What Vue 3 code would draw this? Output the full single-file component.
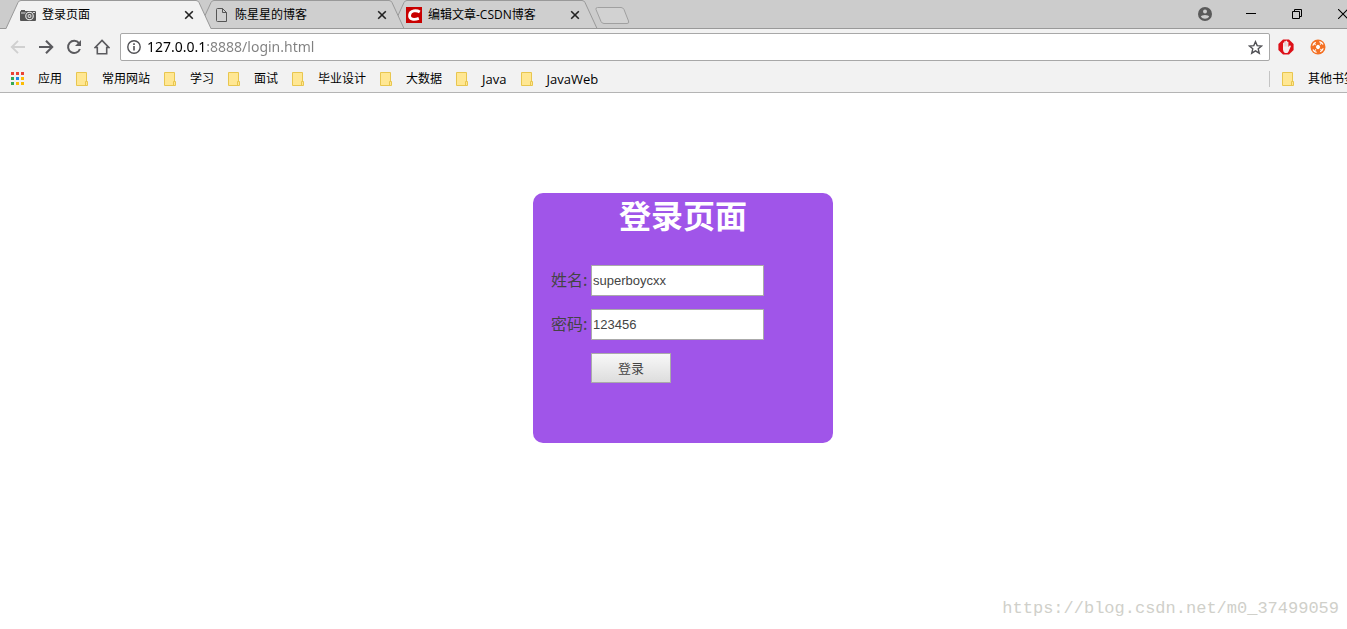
<script setup>
import { ref } from 'vue'

const tabs = [
  { title: '登录页面', icon: 'camera', active: true },
  { title: '陈星星的博客', icon: 'page', active: false },
  { title: '编辑文章-CSDN博客', icon: 'csdn', active: false },
]
const bookmarks = [
  { title: '常用网站' },
  { title: '学习' },
  { title: '面试' },
  { title: '毕业设计' },
  { title: '大数据' },
  { title: 'Java', latin: true },
  { title: 'JavaWeb', latin: true },
]
const appColors = ['#ea4335', '#ea4335', '#ea4335', '#34a853', '#1e88e5', '#fbbc05', '#34a853', '#fbbc05', '#fbbc05']

const url = ref('127.0.0.1:8888/login.html')
const name = ref('superboycxx')
const password = ref('123456')
</script>

<template>
  <div class="screen">
    <div class="browser">
      <header class="chrome">
        <div class="strip">
          <div
            v-for="(tab, i) in tabs"
            :key="tab.title"
            class="tab"
            :class="{ active: tab.active }"
            :style="{ zIndex: tabs.length - i }"
          >
            <svg class="tab-shape" width="208" height="29" viewBox="0 0 208 29" aria-hidden="true">
              <path class="tab-fill" d="M1 29 L13 2.5 Q14 .5 16 .5 H191 Q193 .5 194 2.5 L206 29 Z" />
              <path class="tab-line" d="M0 28.5 H1 L13 2.5 Q14 .5 16 .5 H191 Q193 .5 194 2.5 L206 28.5 H208" />
              <path v-if="!tab.active" class="tab-line" d="M1 28.5 H206" />
            </svg>
            <svg v-if="tab.icon === 'camera'" class="tab-icon" width="16" height="16" viewBox="0 0 16 16" aria-hidden="true">
              <path d="M1 3 H5 V4 H15 Q16 4 16 5 V13 Q16 14 15 14 H1 Q0 14 0 13 V5 Q0 4 1 4 Z" fill="#555" />
              <path d="M1 5 H6 L5 7 H1 Z" fill="#999" />
              <circle cx="9.5" cy="9" r="4.3" fill="#eee" />
              <circle cx="9.5" cy="9" r="3.2" fill="#555" />
              <circle cx="9.5" cy="9" r="2" fill="#ddd" />
              <circle cx="9.5" cy="9" r="1" fill="#666" />
              <path d="M13 5 H15 V6 H13 Z" fill="#ddd" />
            </svg>
            <svg v-else-if="tab.icon === 'page'" class="tab-icon" width="16" height="16" viewBox="0 0 16 16" aria-hidden="true">
              <path d="M4.5 1.5 H9.5 L13.5 5.5 V14.5 H4.5 Q3.5 14.5 3.5 13.5 V2.5 Q3.5 1.5 4.5 1.5 Z M9.5 1.5 V5.5 H13.5" fill="none" stroke="#555" />
            </svg>
            <svg v-else class="tab-icon" width="16" height="16" viewBox="0 0 16 16" aria-hidden="true">
              <path d="M0 0 H16 V16 H0 Z" fill="#c90000" />
              <path d="M13.8 5 C10.5 3 4.2 3.2 3.6 8 C3 13 8.5 13 12.8 11.4" fill="none" stroke="#fff" stroke-width="2.8" />
            </svg>
            <span class="tab-title">{{ tab.title }}</span>
            <button class="tab-close" type="button" :aria-label="`关闭 ${tab.title}`">
              <svg width="10" height="10" viewBox="0 0 10 10"><path d="M1.2 1.2 L8.8 8.8 M8.8 1.2 L1.2 8.8" stroke="#222" stroke-width="1.6" /></svg>
            </button>
          </div>
          <button class="new-tab" type="button" aria-label="新标签页">
            <svg width="35" height="18" viewBox="0 0 35 18">
              <path d="M2.5 .5 H26 Q28 .5 29 2.5 L33.5 14 Q34.5 16.5 32 16.5 H9 Q7 16.5 6 14.5 L1 2.5 Q.5 .5 2.5 .5 Z" fill="#d2d2d2" stroke="#a0a0a0" />
            </svg>
          </button>
          <div class="window-controls">
            <button type="button" aria-label="用户">
              <svg width="14" height="14" viewBox="0 0 14 14"><circle cx="7" cy="7" r="7" fill="#5a5a5a" /><circle cx="7" cy="4.4" r="2" fill="#ccc" /><path d="M2.8 9.8 Q3.4 7.9 7 7.9 Q10.6 7.9 11.2 9.8 Q9.7 11.7 7 11.7 Q4.3 11.7 2.8 9.8Z" fill="#ccc" /></svg>
            </button>
            <button type="button" aria-label="最小化">
              <svg width="10" height="10" viewBox="0 0 10 10"><path d="M0 4.5 H10" stroke="#000" /></svg>
            </button>
            <button type="button" aria-label="还原">
              <svg width="10" height="10" viewBox="0 0 10 10"><path d="M.5 2.5 H7.5 V9.5 H.5 Z M2.5 2.5 V.5 H9.5 V7.5 H7.5" fill="none" stroke="#000" /></svg>
            </button>
            <button type="button" aria-label="关闭">
              <svg width="10" height="10" viewBox="0 0 10 10"><path d="M0 0 L10 10 M10 0 L0 10" stroke="#000" stroke-width="1.1" /></svg>
            </button>
          </div>
        </div>

        <div class="toolbar">
          <nav class="nav">
            <button type="button" aria-label="后退">
              <svg width="16" height="16" viewBox="0 0 16 16"><path d="M15 8 H2 M8 1.8 L1.8 8 L8 14.2" fill="none" stroke="#d0d0d0" stroke-width="1.9" /></svg>
            </button>
            <button type="button" aria-label="前进">
              <svg width="16" height="16" viewBox="0 0 16 16"><path d="M1 8 H14 M8 1.8 L14.2 8 L8 14.2" fill="none" stroke="#5a5a5e" stroke-width="2.1" /></svg>
            </button>
            <button type="button" aria-label="重新加载">
              <svg width="16" height="16" viewBox="0 0 16 16"><path d="M13 4.2 A6.1 6.1 0 1 0 13.9 10" fill="none" stroke="#5a5a5e" stroke-width="2" /><path d="M15 1 V7 H9 Z" fill="#5a5a5e" /></svg>
            </button>
            <button type="button" aria-label="主页">
              <svg width="16" height="16" viewBox="0 0 16 16"><path d="M8 1.4 L14.8 8.5 H12.7 V14.7 H3.3 V8.5 H1.2 Z" fill="none" stroke="#5a5a5e" stroke-width="1.6" /></svg>
            </button>
          </nav>
          <div class="omnibox">
            <svg width="14" height="14" viewBox="0 0 14 14" aria-hidden="true"><circle cx="7" cy="7" r="6.2" fill="none" stroke="#505054" stroke-width="1.4" /><path d="M7 6 V10.5 M7 3.3 V4.9" stroke="#505054" stroke-width="1.6" /></svg>
            <input v-model="url" class="url" type="text" aria-label="地址" spellcheck="false" />
            <button type="button" aria-label="收藏">
              <svg width="15" height="15" viewBox="0 0 16 16"><path d="M8 1.8 L9.8 6 L14.5 6.4 L10.9 9.4 L12 14 L8 11.5 L4 14 L5.1 9.4 L1.5 6.4 L6.2 6 Z" fill="none" stroke="#505054" stroke-width="1.5" /></svg>
            </button>
          </div>
          <div class="extensions">
            <button type="button" aria-label="广告拦截">
              <svg width="16" height="16" viewBox="0 0 16 16">
                <path d="M5 .4 H11 L15.6 5 V11 L11 15.6 H5 L.4 11 V5 Z" fill="#dd1018" />
                <path d="M5 4 Q5.6 3.2 6.2 4 V2.6 Q6.9 1.8 7.6 2.6 V2 Q8.3 1.2 9 2 V3 Q9.7 2.2 10.4 3 V8 L11.6 6.6 Q12.6 6.2 13 7 L11.2 11 Q10.6 13 9.4 14 H6.8 Q5 12.5 5 10.5 Z" fill="#f4eeee" />
                <path d="M6.2 4 V7.5 M7.6 3 V7.5 M9 3.5 V7.5" stroke="#dbb5b5" stroke-width=".5" />
              </svg>
            </button>
            <button type="button" aria-label="扩展程序">
              <svg width="16" height="16" viewBox="0 0 16 16">
                <circle cx="8" cy="8" r="7.5" fill="#f47124" />
                <path d="M8 5.8 L9.2 6.2 L10.2 8 L9.2 9.8 L8 10.2 L6.8 9.8 L5.8 8 L6.8 6.2 Z" fill="#fff" />
                <path d="M2.8 6.6 Q3.6 4.2 5.8 3.4 M9.4 2.7 Q12 3.3 13 5.6 M13.2 9.4 Q12.4 11.8 10.2 12.6 M6.6 13.3 Q4 12.7 3 10.4" fill="none" stroke="#fff" stroke-width="1.3" />
                <path d="M4 4.8 L5.8 5.8 M11.2 4 L10.2 5.8 M12 11.2 L10.2 10.2 M4.8 12 L5.8 10.2" stroke="#fff" stroke-width="1" />
              </svg>
            </button>
          </div>
        </div>

        <nav class="bookmarks">
          <a href="#apps">
            <svg width="13" height="13" viewBox="0 0 13 13" aria-hidden="true">
              <rect v-for="(c, i) in appColors" :key="i" :x="(i % 3) * 5" :y="Math.floor(i / 3) * 5" width="3" height="3" :fill="c" />
            </svg>
            <span>应用</span>
          </a>
          <a v-for="b in bookmarks" :key="b.title" href="#bookmark" :class="{ latin: b.latin }">
            <svg width="12" height="14" viewBox="0 0 12 14" aria-hidden="true"><path d="M.5 .5 H10.5 V9.5 H11.5 V13.5 H.5 Z" fill="#ffe793" stroke="#e8c64f" /><path d="M9.5 13 V9.5 H11" fill="none" stroke="#e8c64f" /></svg>
            <span>{{ b.title }}</span>
          </a>
          <a class="others" href="#others">
            <svg width="12" height="14" viewBox="0 0 12 14" aria-hidden="true"><path d="M.5 .5 H10.5 V9.5 H11.5 V13.5 H.5 Z" fill="#ffe793" stroke="#e8c64f" /><path d="M9.5 13 V9.5 H11" fill="none" stroke="#e8c64f" /></svg>
            <span>其他书签</span>
          </a>
        </nav>
      </header>

      <main class="page">
        <form class="card" @submit.prevent>
          <h1>登录页面</h1>
          <div class="fields">
            <label for="name">姓名:</label>
            <input id="name" v-model="name" type="text" spellcheck="false" />
            <label for="password">密码:</label>
            <input id="password" v-model="password" type="text" />
            <button class="submit" type="submit">登录</button>
          </div>
        </form>
      </main>
    </div>
    <span class="watermark">https://blog.csdn.net/m0_37499059</span>
  </div>
</template>

<style>
body {
  background: #fff;
}
</style>

<style scoped>
.screen {
  position: relative;
  min-height: 100vh;
  overflow: hidden;
  font-family: "Open Sans", "Noto Sans CJK SC", sans-serif;
  font-size: 12px;
  color: #000;
}
/* The window's right edge lies just past the visible area. */
.browser {
  width: calc(100% + 19px);
}
button {
  display: flex;
  align-items: center;
  justify-content: center;
  padding: 0;
  border: 0;
  background: none;
}
svg {
  display: block;
  flex: none;
}
.chrome {
  background: #f2f2f2;
  border-bottom: 1px solid #b4b4b4;
}
.strip {
  display: flex;
  height: 29px;
  padding-left: 5px;
  background: #ccc;
  box-shadow: inset 0 -1px #999;
}
.tab {
  position: relative;
  display: flex;
  align-items: center;
  box-sizing: border-box;
  width: 193px;
  padding: 0 4px 0 15px;
}
.tab-shape {
  position: absolute;
  left: 0;
  top: 0;
}
.tab-fill {
  fill: #cfcfcf;
}
.tab-line {
  fill: none;
  stroke: #999;
}
.active .tab-fill {
  fill: #f2f2f2;
}
.tab-icon,
.tab-title,
.tab-close {
  position: relative;
}
.tab-title {
  flex: 1;
  margin-left: 6px;
  line-height: 28px;
  white-space: nowrap;
}
.tab-close {
  width: 10px;
  height: 16px;
}
.new-tab {
  width: 35px;
  height: 18px;
  margin: 7px 0 0 11px;
}
.window-controls {
  display: flex;
  margin-left: auto;
}
.window-controls button {
  width: 46px;
  height: 27px;
}
.toolbar {
  display: flex;
  align-items: center;
  height: 36px;
  padding: 0 40px 0 10px;
}
.nav {
  display: flex;
  gap: 12px;
  margin-right: 10px;
}
.omnibox {
  display: flex;
  flex: 1;
  align-items: center;
  gap: 6px;
  box-sizing: border-box;
  height: 28px;
  padding: 0 6px;
  border: 1px solid #a8a8a8;
  border-radius: 2px;
  background: #fff;
}
.url {
  flex: 1;
  min-width: 0;
  height: 26px;
  padding: 0 0 1px;
  border: 0;
  outline: 0;
  background: linear-gradient(90deg, #000 59px, #808080 59px);
  background-clip: text;
  -webkit-text-fill-color: transparent;
  font: 14px "Noto Sans", sans-serif;
}
.extensions {
  display: flex;
  gap: 16px;
  margin-left: 8px;
}
.bookmarks {
  display: flex;
  align-items: center;
  gap: 14px;
  height: 27px;
  padding: 0 10px 0 11px;
}
.bookmarks a {
  display: flex;
  align-items: center;
  gap: 14px;
  color: #000;
  line-height: 16px;
  text-decoration: none;
  white-space: nowrap;
}
.bookmarks .latin {
  font-size: 13px;
}
.bookmarks .others {
  margin-left: auto;
  padding-left: 12px;
  border-left: 1px solid #c4c4c4;
}
.page {
  padding: 100px 0;
}
.card {
  box-sizing: border-box;
  width: 300px;
  min-height: 250px;
  margin: 0 auto;
  border-radius: 10px;
  background: #a055e9;
}
h1 {
  margin: 0;
  padding-bottom: 26px;
  color: #fff;
  font-size: 32px;
  line-height: 46px;
  text-align: center;
}
.fields {
  display: grid;
  grid-template-columns: 40px 173px;
  row-gap: 13px;
  align-items: start;
  padding-left: 18px;
  color: #444;
}
label {
  font-size: 16px;
  line-height: 28px;
  font-family: "Noto Sans CJK SC", sans-serif;
}
.fields input {
  box-sizing: border-box;
  width: 100%;
  height: 31px;
  padding: 0 1px;
  border: 1px solid #aaa;
  background: #fff;
  color: #444;
  font: 13px "Liberation Sans", Arial, sans-serif;
}
.submit {
  grid-column: 2;
  width: 80px;
  height: 30px;
  padding-bottom: 2px;
  border: 1px solid #aaa;
  background: linear-gradient(#f8f8f8, #ddd);
  color: #444;
  font: 13px "Noto Sans CJK SC", sans-serif;
}
.watermark {
  position: absolute;
  right: 8px;
  bottom: 8px;
  color: #d0d0ca;
  font: 17px/24px "Liberation Mono", monospace;
}
</style>
